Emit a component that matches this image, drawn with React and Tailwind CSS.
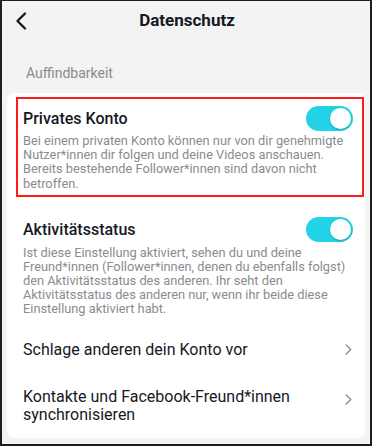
import React from "react";

function Toggle() {
  return (
    <div className="w-[47px] h-[25px] rounded-full bg-[#22d3e8] relative shrink-0">
      <div className="absolute right-[2px] top-[2px] w-[21px] h-[21px] rounded-full bg-white shadow-[0_1px_2px_rgba(0,0,0,0.25)]" />
    </div>
  );
}

function Chevron({ className = "" }) {
  return (
    <svg width="7" height="11" viewBox="0 0 7 11" className={"shrink-0 " + className}>
      <path d="M1.2 1 L5.8 5.5 L1.2 10" fill="none" stroke="#8a8a8e" strokeWidth="1.3" strokeLinecap="round" strokeLinejoin="round" />
    </svg>
  );
}

export default function App() {
  return (
    <div className="w-[372px] h-[446px] bg-[#f3f3f3] border-2 border-[#1e1e1e] border-t overflow-hidden flex flex-col" style={{ fontFamily: "Roboto, 'Noto Sans', sans-serif" }}>
      <div className="relative shrink-0 pt-[9px]">
        <svg width="14" height="18" viewBox="0 0 14 18" className="absolute left-[12px] top-[11px]">
          <path d="M11 1.5 L3.5 9 L11 16.5" fill="none" stroke="#161823" strokeWidth="2.3" strokeLinecap="round" strokeLinejoin="round" />
        </svg>
        <div className="text-center text-[17px] leading-[20px] font-bold text-[#161823] pl-[2px]">Datenschutz</div>
      </div>
      <div className="pl-[24px] mt-[35px] text-[14px] leading-[16px] text-[#8a8a8e]">Auffindbarkeit</div>
      <div className="mx-[5px] mt-[12px] bg-white rounded-[8px] flex-1 mb-[6px] pt-[4px]">
        <div className="ml-[9px] mr-[1px] border-2 border-[#ff1a1a] pl-[5px] pr-[9px] pt-[7px] pb-[4px]">
          <div className="flex items-center justify-between">
            <div className="text-[16px] leading-[19px] font-medium text-[#161823]">Privates Konto</div>
            <Toggle />
          </div>
          <div className="text-[12.8px] leading-[14.2px] text-[#8a8b90] mt-[3px]">
            Bei einem privaten Konto können nur von dir genehmigte Nutzer*innen dir folgen und deine Videos anschauen. Bereits bestehende Follower*innen sind davon nicht betroffen.
          </div>
        </div>
        <div className="pl-[16px] pr-[12px] pt-[20px]">
          <div className="flex items-center justify-between">
            <div className="text-[16px] leading-[19px] font-medium text-[#161823]">Aktivitätsstatus</div>
            <Toggle />
          </div>
          <div className="text-[12.8px] leading-[14px] text-[#8a8b90] mt-[4px]">
            Ist diese Einstellung aktiviert, sehen du und deine Freund*innen (Follower*innen, denen du ebenfalls folgst) den Aktivitätsstatus des anderen. Ihr seht den Aktivitätsstatus des anderen nur, wenn ihr beide diese Einstellung aktiviert habt.
          </div>
        </div>
        <div className="pl-[16px] pr-[13px] pt-[24px] flex items-center justify-between">
          <div className="text-[16px] leading-[19px] text-[#161823]">Schlage anderen dein Konto vor</div>
          <Chevron />
        </div>
        <div className="pl-[16px] pr-[13px] pt-[29px] flex items-start justify-between">
          <div className="text-[16px] leading-[18.3px] text-[#161823] w-[290px]">Kontakte und Facebook-Freund*innen synchronisieren</div>
          <Chevron className="mt-[6px]" />
        </div>
      </div>
    </div>
  );
}
